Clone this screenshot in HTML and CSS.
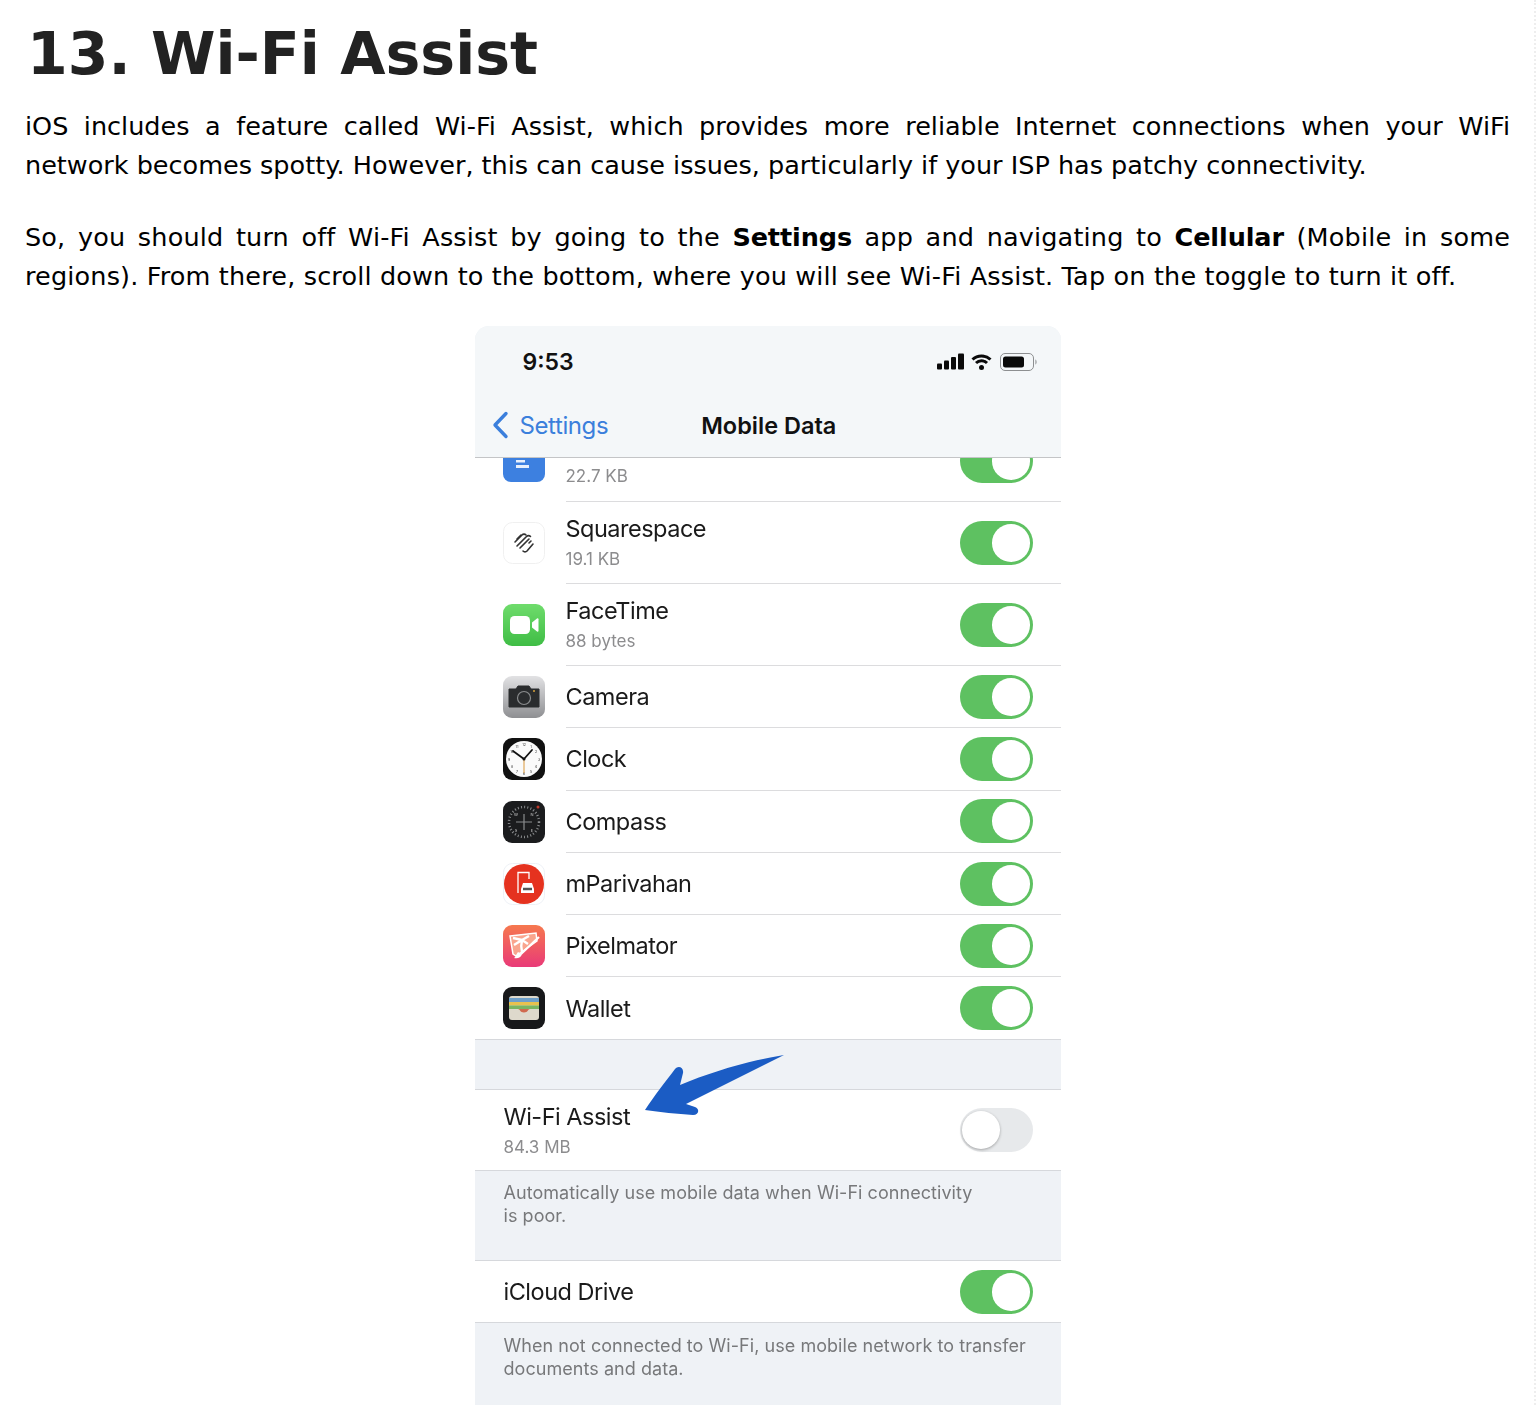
FILE: index.html
```html
<!DOCTYPE html>
<html lang="en">
<head>
<meta charset="utf-8">
<title>13. Wi-Fi Assist</title>
<link rel="stylesheet" href="styles.css">
</head>
<body>
<article class="article">
  <h2 class="title">13. Wi-Fi Assist</h2>
  <p class="para">iOS includes a feature called Wi-Fi Assist, which provides more reliable Internet connections when your WiFi network becomes spotty. However, this can cause issues, particularly if your ISP has patchy connectivity.</p>
  <p class="para para-wide">So, you should turn off Wi-Fi Assist by going to the <b>Settings</b> app and navigating to <b>Cellular</b> (Mobile in some regions). From there, scroll down to the bottom, where you will see Wi-Fi Assist. Tap on the toggle to turn it off.</p>
  <figure class="phone">
    <header class="phone-head">
      <div class="status">
        <span class="time">9:53</span>
        <svg class="status-icons" width="101" height="20" viewBox="0 0 101 20">
          <g fill="#0a0a0a">
            <rect x="0" y="11.500" width="5" height="6" rx="1"/><rect x="7" y="8.500" width="5" height="9" rx="1"/><rect x="14" y="5" width="5" height="12.500" rx="1"/><rect x="21" y="1.500" width="6" height="16" rx="1"/>
            <circle cx="44.500" cy="15.500" r="2.500"/>
            <rect x="66" y="4.500" width="21" height="11" rx="2.500"/>
          </g>
          <path d="M35.500 7.500a13 13 0 0 1 18 0M39 11a8 8 0 0 1 11 0" fill="none" stroke="#0a0a0a" stroke-width="3"/>
          <rect x="63.500" y="1.500" width="33" height="17" rx="4.500" fill="none" stroke="#8d8f91" stroke-width="1"/>
          <path d="M98.500 7.500c1.300.5 1.300 4.500 0 5z" fill="#7d7f81"/>
        </svg>
      </div>
      <div class="nav">
        <a class="back">
          <svg width="19" height="28" viewBox="0 0 19 28"><path d="M15 2.500 4 14l11 11.500" fill="none" stroke="#3b7fdc" stroke-width="3.400" stroke-linecap="round" stroke-linejoin="round"/></svg>
          <span>Settings</span>
        </a>
        <span class="nav-title">Mobile Data</span>
      </div>
    </header>

    <ul class="list">
      <li class="row row-cut">
        <span class="app">
          <svg viewBox="0 0 42 24" width="42" height="24"><path d="M0 0h42v16a8 8 0 0 1-8 8H8a8 8 0 0 1-8-8z" fill="#3d80e0"/><path d="M13 2h9v2.500h-9zM13 7h13v3H13z" fill="#e8f0fc"/></svg>
        </span>
        <div class="cell">
          <div class="text"><span class="sub">22.7 KB</span></div>
          <span class="toggle"><i></i></span>
        </div>
      </li>
      <li class="row row-tall">
        <span class="app">
          <svg viewBox="0 0 42 42" width="42" height="42"><rect x=".5" y=".5" width="41" height="41" rx="9" fill="#fff" stroke="#f0f0f0"/><g fill="none" stroke="#333" stroke-width="1.600" stroke-linecap="round"><path d="M12 20l7-7a2.700 2.700 0 0 1 4 0"/><path d="M14 24l9.500-9.500a2.700 2.700 0 0 1 4 0"/><path d="M17 26l9-9"/><path d="M20 29a2.700 2.700 0 0 0 4 0l6-7"/><path d="M14 17l4-4"/><path d="M26 21l2-2"/></g></svg>
        </span>
        <div class="cell">
          <div class="text"><span class="name">Squarespace</span><span class="sub">19.1 KB</span></div>
          <span class="toggle"><i></i></span>
        </div>
      </li>
      <li class="row row-tall">
        <span class="app">
          <svg viewBox="0 0 42 42" width="42" height="42"><defs><linearGradient id="ft" x1="0" y1="0" x2="0" y2="1"><stop offset="0" stop-color="#6fdc6c"/><stop offset="1" stop-color="#3fbd45"/></linearGradient></defs><rect width="42" height="42" rx="9" fill="url(#ft)"/><rect x="7" y="12" width="20" height="18" rx="4.500" fill="#fff"/><path d="M29 18.500l5-4c.8-.6 1.500-.2 1.500.8v11.400c0 1-.7 1.400-1.500.8l-5-4z" fill="#fff"/></svg>
        </span>
        <div class="cell">
          <div class="text"><span class="name">FaceTime</span><span class="sub">88 bytes</span></div>
          <span class="toggle"><i></i></span>
        </div>
      </li>
      <li class="row">
        <span class="app">
          <svg viewBox="0 0 42 42" width="42" height="42"><defs><linearGradient id="cam" x1="0" y1="0" x2="0" y2="1"><stop offset="0" stop-color="#e2e2e4"/><stop offset="1" stop-color="#8e8f92"/></linearGradient></defs><rect width="42" height="42" rx="9" fill="url(#cam)"/><path d="M6 13h7l2-3h11l2 3h8v18H6z" fill="#2a2c2e" stroke="#2a2c2e" stroke-linejoin="round"/><circle cx="21" cy="22" r="6.500" fill="none" stroke="#8a8c8e" stroke-width="1.200"/><circle cx="31" cy="15" r="1" fill="#d6a13b"/></svg>
        </span>
        <div class="cell">
          <div class="text"><span class="name">Camera</span></div>
          <span class="toggle"><i></i></span>
        </div>
      </li>
      <li class="row">
        <span class="app">
          <svg viewBox="0 0 42 42" width="42" height="42"><rect width="42" height="42" rx="9" fill="#111"/><circle cx="21" cy="21" r="18" fill="#fafafa"/><g font-size="3.600" fill="#333" text-anchor="middle" font-family="Inter"><text x="21" y="8">12</text><text x="28" y="10">1</text><text x="33" y="15">2</text><text x="36" y="22.500">3</text><text x="33" y="30">4</text><text x="28" y="35">5</text><text x="21" y="37">6</text><text x="14" y="35">7</text><text x="9" y="30">8</text><text x="6" y="22.500">9</text><text x="9" y="15">10</text><text x="14" y="10">11</text></g><path d="M21 21 10 13M21 21l8-9" stroke="#111" stroke-width="1.800" stroke-linecap="round"/><path d="M21 21v14" stroke="#e0a85a" stroke-width="1.200"/><circle cx="21" cy="21" r="1.500" fill="#111"/></svg>
        </span>
        <div class="cell">
          <div class="text"><span class="name">Clock</span></div>
          <span class="toggle"><i></i></span>
        </div>
      </li>
      <li class="row">
        <span class="app">
          <svg viewBox="0 0 42 42" width="42" height="42"><rect width="42" height="42" rx="9" fill="#1b1c1e"/><circle cx="21" cy="21" r="15" fill="none" stroke="#8a8c8e" stroke-width="2.500" stroke-dasharray="1 2.200"/><path d="M21 13v16M13 21h16" stroke="#8a8c8e" stroke-width="1.200"/><g font-size="4" fill="#ccc" text-anchor="middle" font-family="Inter"><text x="13" y="15">W</text><text x="29" y="15">N</text><text x="13" y="31">S</text><text x="29" y="31">E</text></g><circle cx="35" cy="6" r="1.500" fill="#c0392b"/></svg>
        </span>
        <div class="cell">
          <div class="text"><span class="name">Compass</span></div>
          <span class="toggle"><i></i></span>
        </div>
      </li>
      <li class="row">
        <span class="app">
          <svg viewBox="0 0 42 42" width="42" height="42"><rect x=".5" y=".5" width="41" height="41" rx="9" fill="#fff" stroke="#eef1f6"/><circle cx="21" cy="21" r="20" fill="#e5321f"/><path d="M15 30V9.500h11V16" fill="none" stroke="#fff" stroke-width="1.300"/><path d="M18 26l2-6h9l2 6v4H18z" fill="#fff"/><path d="M20 26h9" stroke="#555" stroke-width="2.500"/></svg>
        </span>
        <div class="cell">
          <div class="text"><span class="name">mParivahan</span></div>
          <span class="toggle"><i></i></span>
        </div>
      </li>
      <li class="row">
        <span class="app">
          <svg viewBox="0 0 42 42" width="42" height="42"><defs><linearGradient id="px" x1="0" y1="0" x2="0" y2="1"><stop offset="0" stop-color="#f6784e"/><stop offset="1" stop-color="#e93a78"/></linearGradient></defs><rect width="42" height="42" rx="9" fill="url(#px)"/><path d="M7 11l26-3 1 8-21 15-3-2z" fill="#f9a58e" stroke="#fff" stroke-width="1.500"/><path d="M19 27c-1-4-1-8 0-12M10 13l9 2 7-4M11 20l8-5 6 4" fill="none" stroke="#fff" stroke-width="2.400"/><path d="M36 12 18 29" stroke="#fff" stroke-width="2.200"/><path d="M19 29c-1 4-5 5-8 4 2-1 2-4 4-6z" fill="#fff"/></svg>
        </span>
        <div class="cell">
          <div class="text"><span class="name">Pixelmator</span></div>
          <span class="toggle"><i></i></span>
        </div>
      </li>
      <li class="row row-end">
        <span class="app">
          <svg viewBox="0 0 42 42" width="42" height="42"><rect width="42" height="42" rx="9" fill="#17181a"/><rect x="6" y="9" width="30" height="24" rx="3" fill="#ded9cc"/><rect x="6" y="11" width="30" height="4" fill="#6e9fc9"/><rect x="6" y="15" width="30" height="3.500" fill="#e8c14e"/><rect x="6" y="18.500" width="30" height="3.500" fill="#79b562"/><path d="M6 22h9c2 0 2 3.500 6 3.500s4-3.500 6-3.500h9" fill="#d0694f"/></svg>
        </span>
        <div class="cell">
          <div class="text"><span class="name">Wallet</span></div>
          <span class="toggle"><i></i></span>
        </div>
      </li>
    </ul>

    <div class="gap"></div>
    <div class="group">
      <div class="row row-solo row-assist">
        <div class="cell">
          <div class="text"><span class="name">Wi-Fi Assist</span><span class="sub">84.3 MB</span></div>
          <span class="toggle off"><i></i></span>
        </div>
      </div>
    </div>
    <p class="note note-assist">Automatically use mobile data when Wi-Fi connectivity<br>is poor.</p>
    <div class="group">
      <div class="row row-solo">
        <div class="cell">
          <div class="text"><span class="name">iCloud Drive</span></div>
          <span class="toggle"><i></i></span>
        </div>
      </div>
    </div>
    <p class="note">When not connected to Wi-Fi, use mobile network to transfer<br>documents and data.</p>

    <svg class="arrow" width="142" height="62" viewBox="0 0 142 62"><path d="M142 0 44 49l9 3c5 2 4 8-2 8C35 59 18 57 3 55 12 41 24 26 33 14c3-4 9-2 8 4l-3 12C70 17 105 6 142 0z" fill="#1b5cc4"/></svg>
  </figure>
</article>
</body>
</html>
```
FILE: styles.css
```css
* { box-sizing: border-box; }
html, body { margin: 0; padding: 0; background: #fff; }
body { font-family: "DejaVu Sans", Verdana, sans-serif; color: #000; height: 1405px; overflow: hidden; border-right: 2px dotted #eeeeee; }
.article { padding: 0 24px 0 25px; }
.title { margin: 0; padding: 17px 0 0 2px; font-size: 58.500px; line-height: 75px; font-weight: 700; color: #222; }
.para { margin: 0 0 33px; font-size: 25.500px; line-height: 39px; text-align: justify; }
.para:first-of-type { margin-top: 15px; }
.para-wide { margin-bottom: 30px; letter-spacing: .165px; }
.para-wide b { letter-spacing: -.1px; }
.phone { position: relative; width: 586px; margin: 0 auto; height: 1079px; background: #eff2f6; overflow: hidden; border-radius: 14px 14px 0 0; font-family: Inter, Roboto, sans-serif; filter: blur(.45px); }
.phone-head { height: 132px; background: #f4f7f9; border-bottom: 1px solid #c4c5c7; }
.status { display: flex; justify-content: space-between; align-items: center; height: 72px; padding: 0 23px 0 48px; }
.time { font-size: 23px; font-weight: 600; color: #111; }
.nav { display: flex; align-items: center; height: 54px; padding-left: 16px; }
.back { display: flex; align-items: center; gap: 10px; color: #3b7fdc; font-size: 24px; letter-spacing: -.4px; }
.nav-title { margin-left: 93px; font-size: 23.500px; font-weight: 600; color: #111; }
.list { list-style: none; margin: 0; padding: 0; background: #fff; border-bottom: 1px solid #d6d8dc; }
.row { display: flex; align-items: center; height: 62.300px; padding-left: 28px; background: #fff; }
.row-tall { height: 82px; }
.row-cut { height: 44px; align-items: flex-start; overflow: hidden; }
.row-end { height: 62px; }
.app { display: block; flex: none; width: 42px; height: 42px; margin-right: 21px; }
.row-cut .app { height: 24px; }
.app svg { display: block; }
.cell { flex: 1; display: flex; align-items: center; justify-content: space-between; height: 100%; padding-right: 28px; border-bottom: 1px solid #dcdcde; }
.row-end .cell, .row-solo .cell { border-bottom: 0; }
.row-cut .cell { align-items: flex-start; }
.row-cut .text { padding-top: 7px; }
.row-cut .toggle { margin-top: -19px; }
.row-tall .text { padding-bottom: 2px; }
.text { display: flex; flex-direction: column; gap: 5px; }
.name { font-size: 23.500px; line-height: 29px; letter-spacing: -.5px; color: #1a1a1a; }
.sub { font-size: 17px; line-height: 22px; color: #8c8c8e; }
.toggle { position: relative; flex: none; width: 73px; height: 44px; border-radius: 22px; background: #5ec161; }
.toggle i { position: absolute; right: 2.500px; top: 3px; width: 38.500px; height: 38px; border-radius: 50%; background: #fff; }
.toggle.off { background: #e7e9eb; }
.toggle.off i { right: auto; left: 2px; box-shadow: 0 1px 3px rgba(0,0,0,.3); }
.gap { height: 49px; }
.group { background: #fff; border-top: 1px solid #d6d8dc; border-bottom: 1px solid #d6d8dc; }
.row-solo { height: 61px; padding-left: 29px; }
.row-assist { height: 80px; }
.note { margin: 0; padding: 11px 28px 0 29px; font-size: 18px; line-height: 23px; letter-spacing: .05px; color: #77787a; }
.note-assist { height: 89px; padding-top: 10px; }
.arrow { position: absolute; left: 167px; top: 729px; }
```
